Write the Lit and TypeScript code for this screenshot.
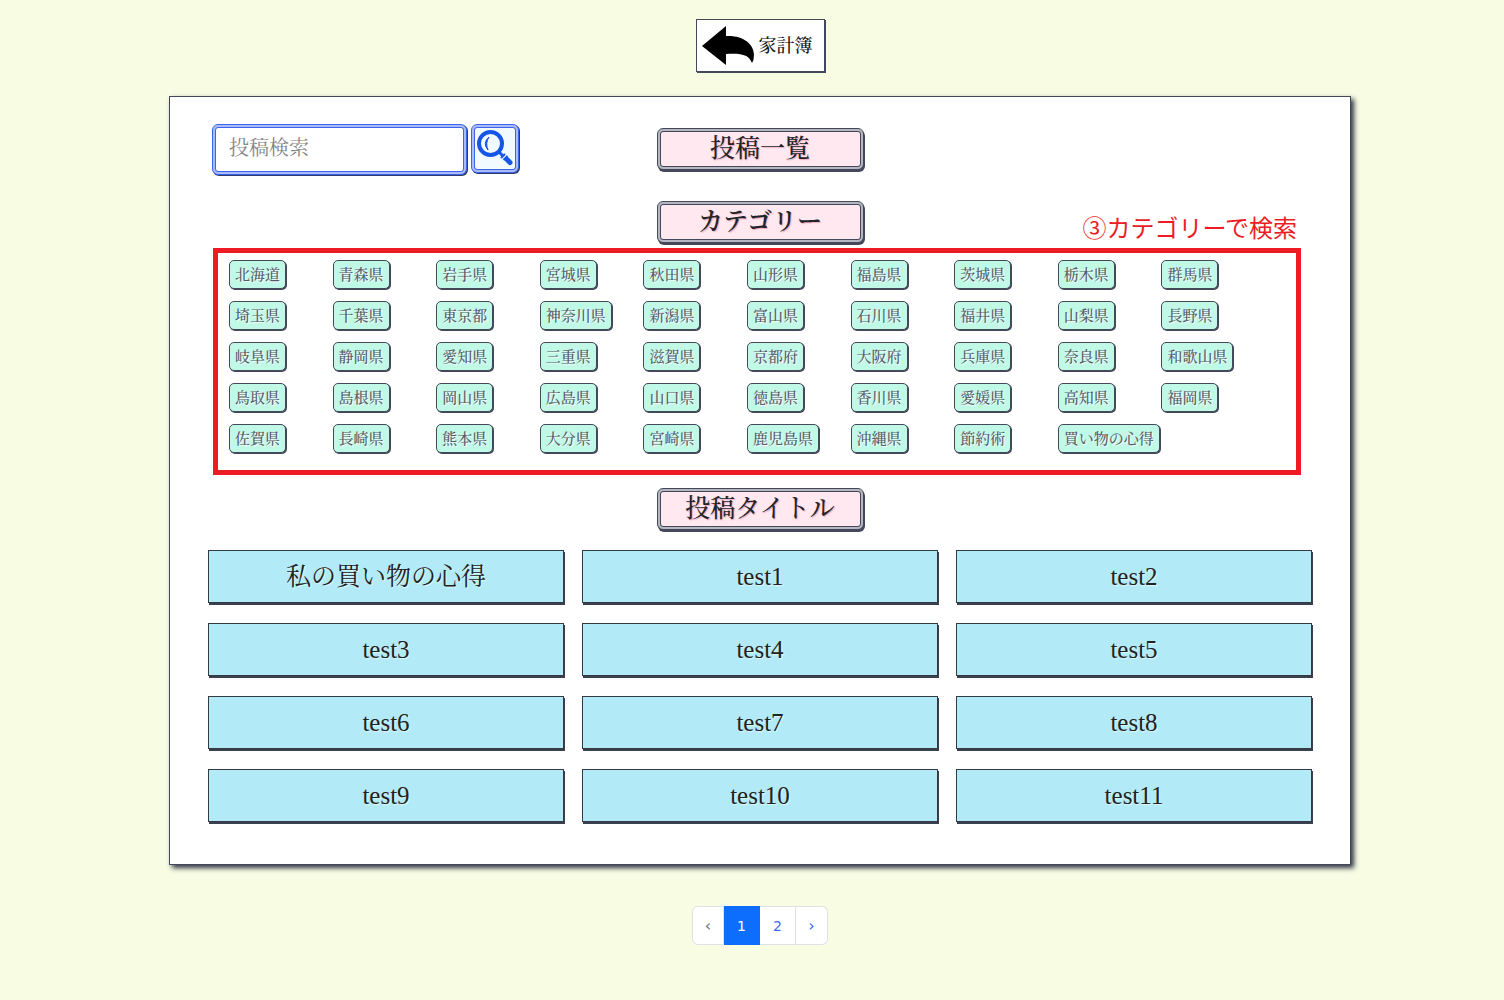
import { LitElement, html, css } from "lit";
import { customElement, state } from "lit/decorators.js";
import { classMap } from "lit/directives/class-map.js";

const CATEGORIES = [
  "北海道", "青森県", "岩手県", "宮城県", "秋田県", "山形県", "福島県", "茨城県", "栃木県", "群馬県",
  "埼玉県", "千葉県", "東京都", "神奈川県", "新潟県", "富山県", "石川県", "福井県", "山梨県", "長野県",
  "岐阜県", "静岡県", "愛知県", "三重県", "滋賀県", "京都府", "大阪府", "兵庫県", "奈良県", "和歌山県",
  "鳥取県", "島根県", "岡山県", "広島県", "山口県", "徳島県", "香川県", "愛媛県", "高知県", "福岡県",
  "佐賀県", "長崎県", "熊本県", "大分県", "宮崎県", "鹿児島県", "沖縄県", "節約術", "買い物の心得",
];

const POSTS = [
  "私の買い物の心得", "test1", "test2", "test3", "test4", "test5",
  "test6", "test7", "test8", "test9", "test10", "test11",
];

@customElement("app-root")
export class AppRoot extends LitElement {
  static styles = css`
    :host {
      display: block;
      box-sizing: border-box;
      min-height: 100vh;
      padding: 19px 153px 55px 169px;
      background: #f8fce3;
      color: #212529;
      font-family: "Liberation Serif", "Noto Serif CJK JP", "Noto Sans CJK JP", serif;
    }
    *, *::before, *::after { box-sizing: border-box; }
    a { color: inherit; text-decoration: none; }
    svg { display: block; }

    .top { display: flex; justify-content: center; }
    .back {
      display: flex;
      align-items: center;
      gap: 4px;
      height: 53px;
      padding: 0 11px 0 5px;
      border: 1px solid #43485a;
      background: #fff;
      box-shadow: 1px 1px 0 #43485a;
      font-size: 18px;
      font-weight: 500;
      line-height: 24px;
      color: #111;
    }

    .panel {
      margin-top: 24px;
      padding: 27px 38px 42px;
      border: 1px solid #43485a;
      background: #fff;
      box-shadow: 3px 3px 5px #2f3546;
    }

    .head {
      display: grid;
      grid-template-columns: 1fr auto 1fr;
      align-items: start;
    }
    .search { display: flex; gap: 4px; padding-left: 4px; }
    .search input {
      width: 255px;
      height: 51px;
      padding: 0 13px 2px;
      border: 4px double #3f63ee;
      border-radius: 6px;
      outline: 0;
      background: linear-gradient(#fff, #fff) padding-box, #a9bcfa border-box;
      box-shadow: 1px 1px 0 #2f3b66;
      font: 20px "Liberation Serif", "Noto Serif CJK JP", "Noto Sans CJK JP", serif;
      color: #212529;
    }
    .search input::placeholder { color: #858585; opacity: 1; }
    .search button {
      width: 48px;
      height: 49px;
      padding: 0;
      border: 4px double #3f63ee;
      border-radius: 6px;
      background: linear-gradient(#f0faff, #f0faff) padding-box, #a9bcfa border-box;
      box-shadow: 1px 1px 0 #2f3b66;
      cursor: pointer;
    }

    .title {
      width: 207px;
      height: 42px;
      margin: 0 auto;
      border: 4px double #43485a;
      border-radius: 6px;
      background: linear-gradient(#ffe8ef, #ffe8ef) padding-box, #b4b6c0 border-box;
      box-shadow: 1px 2px 0 #43485a;
      font-size: 25px;
      font-weight: 500;
      line-height: 34px;
      text-align: center;
      text-shadow: 1px 1px 1px #f3a9bd;
    }
    .head .title { margin-top: 4px; }
    .title.category { margin-top: 26px; font-weight: 600; }
    .title.posts-title { margin-top: 13px; }

    .categories { position: relative; margin: 5px 11px 0 5px; }
    .note {
      position: absolute;
      right: 4px;
      bottom: 100%;
      margin: 0 0 5px;
      font: 24px/32px "Noto Sans CJK JP", sans-serif;
      color: #ed1c24;
      white-space: nowrap;
    }
    .frame {
      position: absolute;
      inset: 0;
      border: 5px solid #ed1c24;
      pointer-events: none;
    }
    .chips {
      display: grid;
      grid-template-columns: repeat(10, minmax(0, 1fr));
      row-gap: 12px;
      margin: 0;
      padding: 12px 36px 22px 16px;
      list-style: none;
    }
    .chips li { display: flex; }
    .chip {
      height: 29px;
      padding: 0 5px;
      border: 1px solid #43485a;
      border-radius: 5px;
      background: #c1f9e7;
      box-shadow: 1px 1px 0 #43485a;
      font: 500 15px/26px "Liberation Serif", "Noto Serif CJK JP", "Noto Sans CJK JP", serif;
      color: #565b68;
      text-shadow: 1px 1px 1px #fff;
      white-space: nowrap;
      cursor: pointer;
    }

    .posts {
      display: grid;
      grid-template-columns: repeat(3, minmax(0, 1fr));
      gap: 20px 18px;
      margin: 20px 0 0;
      padding: 0;
      list-style: none;
    }
    .post {
      display: block;
      height: 53px;
      border: 1px solid #333a40;
      background: #b2ebf7;
      box-shadow: 1px 2px 0 #3a4050;
      font-size: 25px;
      line-height: 51px;
      text-align: center;
      color: #222;
      text-shadow: 1px 1px 1px #dff8fc;
    }

    .pager {
      display: flex;
      justify-content: center;
      margin-top: 41px;
      font: 14px/20px "DejaVu Sans", sans-serif;
    }
    .pager button {
      width: 36px;
      height: 39px;
      padding: 0;
      border: 1px solid #dee2e6;
      border-left-width: 0;
      background: #fff;
      font: inherit;
      color: #3d6bff;
      cursor: pointer;
    }
    .pager .edge { width: 32px; font-size: 16px; }
    .pager .edge:first-child { border-left-width: 1px; border-radius: 6px 0 0 6px; }
    .pager .edge:last-child { border-radius: 0 6px 6px 0; }
    .pager .edge:disabled { color: #6c757d; cursor: default; }
    .pager .current { border-color: #0d6efd; background: #0d6efd; color: #fff; }
  `;

  @state() private page = 1;

  render() {
    return html`
      <nav class="top">
        <a class="back" href="#kakeibo">
          <svg width="53" height="40" viewBox="0 0 53 40" aria-hidden="true">
            <path d="M0 20 24 0V10C41 9 52 18 52 29Q52 34 50 37C47 29 40 27 24 28V39Z" fill="#000" />
          </svg>
          <span>家計簿</span>
        </a>
      </nav>

      <main class="panel">
        <div class="head">
          <form class="search" role="search" @submit=${(e: Event) => e.preventDefault()}>
            <input type="search" name="q" placeholder="投稿検索" aria-label="投稿検索" />
            <button type="submit" aria-label="検索">
              <svg width="40" height="41" viewBox="0 0 40 41" fill="none" aria-hidden="true">
                <circle cx="15.500" cy="15.500" r="11.500" stroke="#1456e8" stroke-width="4" />
                <path d="M14 9Q7 15 13 22Q10 15 14 9Z" fill="#1456e8" stroke="#1456e8" />
                <path d="m23 23 4.500 4.500" stroke="#1456e8" stroke-width="3" />
                <path d="m26 30 4-4" stroke="#1456e8" stroke-width="2" />
                <path d="m28.500 32 4-4" stroke="#1456e8" stroke-width="2" />
                <path d="m32 31.500 3 3" stroke="#1456e8" stroke-width="5" stroke-linecap="round" />
              </svg>
            </button>
          </form>
          <h1 class="title">投稿一覧</h1>
        </div>

        <h2 class="title category">カテゴリー</h2>
        <section class="categories" aria-label="カテゴリー">
          <p class="note">③カテゴリーで検索</p>
          <ul class="chips">
            ${CATEGORIES.map((name) => html`<li><button class="chip" type="button">${name}</button></li>`)}
          </ul>
          <div class="frame"></div>
        </section>

        <h2 class="title posts-title">投稿タイトル</h2>
        <ul class="posts">
          ${POSTS.map((post) => html`<li><a class="post" href="#post">${post}</a></li>`)}
        </ul>
      </main>

      <nav class="pager" aria-label="ページ">
        <button class="edge" aria-label="前へ" ?disabled=${this.page === 1} @click=${() => (this.page = 1)}>‹</button>
        ${[1, 2].map(
          (n) => html`<button class=${classMap({ current: n === this.page })} @click=${() => (this.page = n)}>${n}</button>`,
        )}
        <button class="edge" aria-label="次へ" ?disabled=${this.page === 2} @click=${() => (this.page = 2)}>›</button>
      </nav>
    `;
  }
}
